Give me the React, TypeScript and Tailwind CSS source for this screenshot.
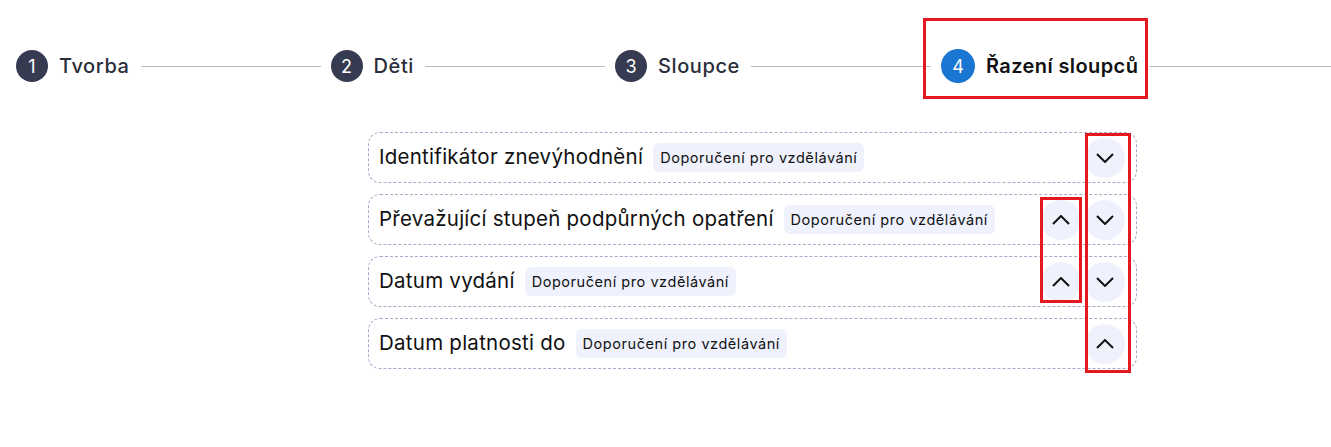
import React from "react";

const steps = [
  { n: 1, label: "Tvorba" },
  { n: 2, label: "Děti" },
  { n: 3, label: "Sloupce" },
  { n: 4, label: "Řazení sloupců", active: true },
];

const rows = [
  { title: "Identifikátor znevýhodnění", up: false, down: true },
  { title: "Převažující stupeň podpůrných opatření", up: true, down: true },
  { title: "Datum vydání", up: true, down: true },
  { title: "Datum platnosti do", up: true, down: false },
];

function Chevron({ dir }: { dir: "up" | "down" }) {
  return (
    <svg width="18" height="10" viewBox="0 0 18 10" fill="none">
      <polyline
        points={dir === "down" ? "1,1 9,9 17,1" : "1,9 9,1 17,9"}
        stroke="#111"
        strokeWidth="2"
        strokeLinejoin="miter"
      />
    </svg>
  );
}

function RoundBtn({ dir }: { dir: "up" | "down" }) {
  return (
    <button className="w-10 h-10 rounded-full bg-[#eff1fd] flex items-center justify-center">
      <Chevron dir={dir} />
    </button>
  );
}

export default function App() {
  return (
    <div className="relative w-[1331px] h-[447px] bg-white overflow-hidden font-['Inter',sans-serif] text-[#111]">
      {/* Stepper */}
      <div className="flex items-center pt-[49px] pl-4">
        {steps.map((s, i) => (
          <div key={s.n} className={"flex items-center " + (i === steps.length - 1 ? "flex-1" : "")}>
            <div
              className={
                "rounded-full flex items-center justify-center text-white text-[18px] " +
                (s.active ? "w-[34px] h-[34px] bg-[#1976d2]" : "w-8 h-8 bg-[#363b51]")
              }
            >
              {s.n}
            </div>
            <span
              className={
                "ml-[11px] text-[20px] " +
                (s.active ? "font-semibold tracking-[0.4px] text-[#111]" : "font-medium tracking-[0.6px] text-[#2a2d3a]")
              }
            >
              {s.label}
            </span>
            <div
              className={
                "h-px bg-[#bdbdbd] ml-[11px] " + (i === steps.length - 1 ? "flex-1" : "w-[180px] mr-[10px]")
              }
            />
          </div>
        ))}
      </div>

      {/* Column order list */}
      <div className="pl-[368px] mt-[49px]">
        <div className="w-[769px] flex flex-col gap-[11px]">
          {rows.map((r) => (
            <div
              key={r.title}
              className="h-[51px] border border-dashed border-[#a9a8c6] rounded-xl flex items-center pl-[10px] pr-[11px]"
            >
              <span className="text-[20.5px] tracking-[0.25px] text-[#111]">{r.title}</span>
              <span className="ml-[10px] px-[7px] h-[29px] flex items-center rounded-md bg-[#eff1fd] text-[14.5px] tracking-[0.55px] text-[#111]">
                Doporučení pro vzdělávání
              </span>
              <div className="ml-auto flex items-center gap-1">
                {r.up && <RoundBtn dir="up" />}
                {r.down ? <RoundBtn dir="down" /> : null}
              </div>
            </div>
          ))}
        </div>
      </div>

      {/* Annotation boxes */}
      <div className="absolute left-[923px] top-[18px] w-[225px] h-[81px] border-[3px] border-[#e3191f]" />
      <div className="absolute left-[1040px] top-[197px] w-[42px] h-[106px] border-[3px] border-[#e3191f]" />
      <div className="absolute left-[1085px] top-[133px] w-[46px] h-[240px] border-[3px] border-[#e3191f]" />
    </div>
  );
}
